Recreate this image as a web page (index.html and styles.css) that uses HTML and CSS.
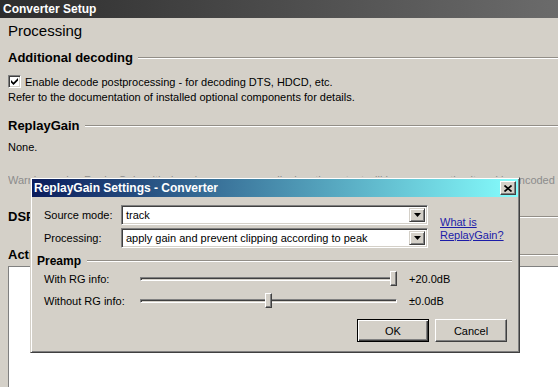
FILE: index.html
```html
<!DOCTYPE html>
<html lang="en">
<head>
  <meta charset="UTF-8">
  <title>Converter Setup</title>
  <link rel="stylesheet" href="styles.css">
</head>
<body>
  <div class="window">
    <div class="caption">Converter Setup</div>
    <div class="page">
      <div class="page-title">Processing</div>

      <div class="group-title">Additional decoding</div>
      <label class="check-row">
        <span class="checkbox">
          <svg width="7" height="7" viewBox="0 0 7 7"><path d="M0 2 L0 4.5 L2.5 7 L7 2.5 L7 0 L2.5 4.5 Z" fill="#000"/></svg>
        </span>
        Enable decode postprocessing - for decoding DTS, HDCD, etc.
      </label>
      <p class="note">Refer to the documentation of installed optional components for details.</p>

      <div class="group-title rg-title">ReplayGain</div>
      <p class="none">None.</p>
      <p class="warning">Warning: using ReplayGain with decoders may cause clipping; the output will be permanently altered in encoded files.</p>

      <div class="group-title dsp-title">DSP Manager</div>
      <div class="group-title actions-title">Actions after encoding has completed</div>
      <div class="listbox"></div>
    </div>
  </div>

  <div class="dialog">
    <div class="dlg-caption">
      <span>ReplayGain Settings - Converter</span>
      <span class="close-btn">
        <svg width="8" height="7" viewBox="0 0 8 7"><path d="M0.5 0.5 L7.5 6.5 M7.5 0.5 L0.5 6.5" stroke="#000" stroke-width="1.7"/></svg>
      </span>
    </div>
    <div class="dlg-body">
      <div class="mode-grid">
        <span>Source mode:</span>
        <div class="combo">
          <span class="combo-text">track</span>
          <span class="drop-btn"><svg width="7" height="4" viewBox="0 0 7 4"><path d="M0 0 H7 L3.5 4 Z" fill="#000"/></svg></span>
        </div>
        <a class="help-link" href="#">What is<br>ReplayGain?</a>
        <span>Processing:</span>
        <div class="combo">
          <span class="combo-text">apply gain and prevent clipping according to peak</span>
          <span class="drop-btn"><svg width="7" height="4" viewBox="0 0 7 4"><path d="M0 0 H7 L3.5 4 Z" fill="#000"/></svg></span>
        </div>
      </div>

      <div class="group-title preamp-title">Preamp</div>
      <div class="slider-row">
        <span class="slider-label">With RG info:</span>
        <div class="track">
          <span class="channel"></span>
          <span class="thumb" style="left: 250px"></span>
        </div>
        <span class="slider-value">+20.0dB</span>
      </div>
      <div class="slider-row">
        <span class="slider-label">Without RG info:</span>
        <div class="track">
          <span class="channel"></span>
          <span class="thumb" style="left: 125px"></span>
        </div>
        <span class="slider-value">&plusmn;0.0dB</span>
      </div>

      <div class="buttons">
        <button class="btn btn-default">OK</button>
        <button class="btn">Cancel</button>
      </div>
    </div>
  </div>
</body>
</html>
```

FILE: styles.css
```css
body {
  margin: 0;
  width: 558px;
  height: 387px;
  overflow: hidden;
  position: relative;
  background: #d4d0c8;
  font-family: "Liberation Sans", Arial, sans-serif;
  font-size: 11px;
  color: #000;
}
p {
  margin: 0;
  line-height: 14px;
}

/* background window */
.window {
  height: 387px;
  display: flex;
  flex-direction: column;
}
.caption {
  height: 18px;
  line-height: 18px;
  padding-left: 3px;
  color: #fff;
  font-size: 12px;
  font-weight: bold;
  background: linear-gradient(to right, #2d2d2d, #6b6b6b);
}
.page {
  flex: 1;
  min-height: 0;
  display: flex;
  flex-direction: column;
  padding-left: 8px;
}
.page-title {
  font-size: 15px;
  line-height: 18px;
  margin-top: 4px;
}
.group-title {
  display: flex;
  align-items: center;
  font-size: 13px;
  font-weight: bold;
  line-height: 16px;
  margin-top: 10px;
  white-space: nowrap;
}
.group-title::after {
  content: "";
  flex: 1;
  border-top: 1px solid #928e87;
  border-bottom: 1px solid #fff;
  margin-left: 5px;
}
.check-row {
  display: flex;
  align-items: center;
  gap: 4px;
  height: 15px;
  margin-top: 8px;
}
.checkbox {
  width: 13px;
  height: 13px;
  box-sizing: border-box;
  background: #fff;
  border: 1px solid;
  border-color: #808080 #fff #fff #808080;
  box-shadow: inset 1px 1px #404040, inset -1px -1px #d4d0c8;
  display: flex;
  align-items: center;
  justify-content: center;
}
.note {
  margin-top: 1px;
}
.rg-title {
  margin-top: 14px;
}
.none {
  margin-top: 6px;
}
.warning {
  margin-top: 19px;
  color: #8c8c8c;
  white-space: nowrap;
  overflow: hidden;
}
.dsp-title {
  margin-top: 22px;
}
.actions-title {
  margin-top: 22px;
}
.listbox {
  flex: 1;
  margin-top: 3px;
  background: #fff;
  border-top: 1px solid #808080;
  border-left: 1px solid #808080;
}

/* dialog */
.dialog {
  position: absolute;
  left: 30px;
  top: 177px;
  width: 490px;
  height: 176px;
  box-sizing: border-box;
  padding: 1px;
  background: #d4d0c8;
  border: 1px solid;
  border-color: #d4d0c8 #404040 #404040 #d4d0c8;
  box-shadow: inset 1px 1px #fff, inset -1px -1px #808080;
  display: flex;
  flex-direction: column;
}
.dlg-caption {
  height: 18px;
  display: flex;
  align-items: center;
  justify-content: space-between;
  padding: 0 2px;
  color: #fff;
  font-size: 12px;
  font-weight: bold;
  background: linear-gradient(to right, #0b1c5c, #85fdfd);
}
.close-btn {
  width: 16px;
  height: 14px;
  box-sizing: border-box;
  background: #d4d0c8;
  border: 1px solid;
  border-color: #fff #404040 #404040 #fff;
  box-shadow: inset -1px -1px #808080;
  display: flex;
  align-items: center;
  justify-content: center;
}
.dlg-body {
  flex: 1;
  padding: 8px 6px 0 12px;
}
.mode-grid {
  display: grid;
  grid-template-columns: 77px 307px auto;
  grid-template-rows: 20px 20px;
  row-gap: 3px;
  align-items: center;
}
.combo {
  height: 20px;
  box-sizing: border-box;
  padding: 2px;
  background: #fff;
  border: 1px solid;
  border-color: #808080 #fff #fff #808080;
  box-shadow: inset 1px 1px #404040, inset -1px -1px #d4d0c8;
  display: flex;
  align-items: center;
}
.combo-text {
  flex: 1;
  padding-left: 2px;
  white-space: nowrap;
  overflow: hidden;
}
.drop-btn {
  width: 16px;
  height: 100%;
  box-sizing: border-box;
  background: #d4d0c8;
  border: 1px solid;
  border-color: #d4d0c8 #404040 #404040 #d4d0c8;
  box-shadow: inset 1px 1px #fff, inset -1px -1px #808080;
  display: flex;
  align-items: center;
  justify-content: center;
}
.help-link {
  grid-column: 3;
  grid-row: 1 / span 2;
  margin: 4px 0 0 12px;
  line-height: 13px;
  color: #1c1ca8;
  text-decoration: underline;
}
.preamp-title {
  font-size: 12px;
  line-height: 14px;
  margin: 6px 0 0 -7px;
}
.preamp-title::after {
  margin-left: 6px;
}
.slider-row {
  display: flex;
  align-items: center;
  height: 22px;
}
.slider-row:first-of-type {
  margin-top: 4px;
}
.slider-label {
  width: 96px;
}
.track {
  position: relative;
  width: 257px;
  height: 22px;
  display: flex;
  align-items: center;
}
.channel {
  flex: 1;
  height: 4px;
  box-sizing: border-box;
  border: 1px solid;
  border-color: #808080 #fff #fff #808080;
  box-shadow: inset 1px 1px #404040;
}
.thumb {
  position: absolute;
  top: 3px;
  width: 7px;
  height: 15px;
  box-sizing: border-box;
  background: #d4d0c8;
  border: 1px solid;
  border-color: #fff #404040 #404040 #fff;
  box-shadow: inset -1px -1px #808080;
}
.slider-value {
  margin-left: 12px;
}
.buttons {
  display: flex;
  justify-content: flex-end;
  gap: 6px;
  margin: 7px 5px 0 0;
}
.btn {
  width: 72px;
  height: 23px;
  padding: 0;
  font: inherit;
  color: #000;
  background: #d4d0c8;
  border: 1px solid;
  border-color: #fff #404040 #404040 #fff;
  box-shadow: inset -1px -1px #808080;
}
.btn-default {
  border-color: #000;
  box-shadow: inset 1px 1px #fff, inset -1px -1px #404040, inset -2px -2px #808080;
}
```
